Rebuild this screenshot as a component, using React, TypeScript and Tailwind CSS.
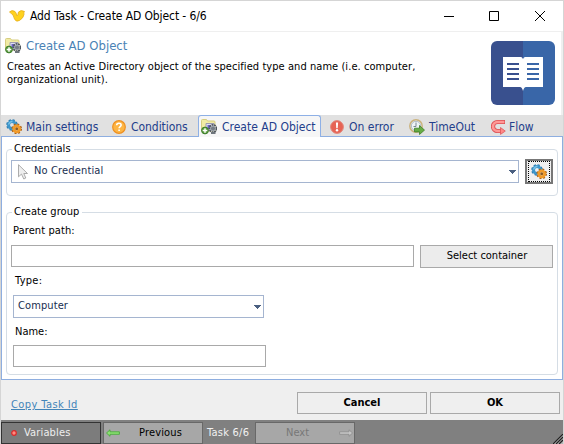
import type { ReactNode } from "react";

function Gears({ className }: { className: string }) {
  return (
    <svg viewBox="0 0 16 16" className={className}>
      <circle cx="6" cy="6" r="4.6" fill="none" stroke="#2b78ad" strokeWidth="2.4" strokeDasharray="2.1 1.5" />
      <circle cx="6" cy="6" r="3.5" fill="none" stroke="#3d96cb" strokeWidth="3" />
      <path d="M2.5 5.5Q3.5 2.5 6.5 2.4" fill="none" stroke="#7cc4e8" strokeWidth="1.2" />
      <circle cx="10.7" cy="9.8" r="4.3" fill="none" stroke="#a85e14" strokeWidth="2" strokeDasharray="1.9 1.48" />
      <circle cx="10.7" cy="9.8" r="3" fill="#fff2d8" stroke="#f19a28" strokeWidth="2.7" />
      <circle cx="10.7" cy="9.8" r="1.5" fill="#8d5a20" />
    </svg>
  );
}

function FolderGear({ className }: { className: string }) {
  return (
    <svg viewBox="0 0 16 16" className={className}>
      <path d="M.5 1.5Q.5.5 1.5.5h4l1 1.5h6.5q1 0 1 1v9H.5z" fill="#f1eba4" stroke="#d6cd80" />
      <path d="M5 4.5h8v7H5z" fill="#dfdff0" stroke="#9a9ab0" />
      <path d="M6.5 6h3v4h-3z" fill="#6b62c4" />
      <circle cx="12" cy="9.5" r="3.3" fill="none" stroke="#50575e" strokeWidth="2.4" strokeDasharray="1.7 .6" />
      <circle cx="12" cy="9.5" r="2.5" fill="#757d86" stroke="#a6adb4" />
      <path d="M10 13h4.5v2H10z" fill="#6e757c" />
      <circle cx="4" cy="11.5" r="3.4" fill="#5d9c40" stroke="#3c7d2a" />
      <path d="M4 9.2v4.6M1.7 11.5h4.6" stroke="#fff" strokeWidth="1.5" />
    </svg>
  );
}

function Question() {
  return (
    <svg viewBox="0 0 14 14" className="mt-[5px] h-[14px] w-[14px] shrink-0">
      <circle cx="7" cy="7" r="6.3" fill="#fdb544" stroke="#ee8f20" strokeWidth="1.2" />
      <path d="M4.7 5.3c0-2.8 4.6-2.6 4.4-.2C9 6.6 7.1 6.6 7.1 8.3" fill="none" stroke="#fff" strokeWidth="1.6" />
      <path d="M6.3 9.5h1.6v1.6H6.3z" fill="#fff" />
    </svg>
  );
}

function ErrorMark() {
  return (
    <svg viewBox="0 0 14 14" className="mt-[5px] h-[14px] w-[14px] shrink-0">
      <circle cx="7" cy="7" r="6.4" fill="#e66354" stroke="#e2877c" />
      <path d="M5.9 2.6h2.2l-.4 5.6H6.3z" fill="#fff" />
      <circle cx="7" cy="10.3" r="1.2" fill="#fff" />
    </svg>
  );
}

function Clock() {
  return (
    <svg viewBox="0 0 16 16" className="mt-[4px] h-4 w-4 shrink-0">
      <circle cx="7" cy="7" r="6.2" fill="#eef3f6" stroke="#cbb27c" strokeWidth="1.5" />
      <circle cx="7" cy="7" r="4.7" fill="none" stroke="#9eabb5" strokeWidth=".8" />
      <path d="M7 3.5v4H4.5" fill="none" stroke="#7a8791" />
      <path d="M5.5 9.2h5V6.5l5 4.6-5 4.4v-2.6h-5z" fill="#67ad45" stroke="#3e7d27" strokeWidth=".8" />
    </svg>
  );
}

function FlowArrow() {
  return (
    <svg viewBox="0 0 15 16" className="mt-[4px] h-4 w-[15px] shrink-0">
      <path d="M14 3H6.5a4.5 4.5 0 0 0 0 9H10" fill="none" stroke="#dc4e52" strokeWidth="4.2" />
      <path d="M13.4 3H6.5a4.5 4.5 0 0 0 0 9H10" fill="none" stroke="#ff9896" strokeWidth="2.6" />
      <path d="M9.5 8.5l4.8 3.6-4.8 3.3z" fill="#ff8a88" stroke="#dc4e52" strokeWidth=".7" />
    </svg>
  );
}

function Caret() {
  return (
    <svg viewBox="0 0 7 4" className="h-1 w-[7px]" shapeRendering="crispEdges">
      <path d="M0 0h7v1H6v1H5v1H4v1H3V3H2V2H1V1H0z" fill="#4a5f80" />
    </svg>
  );
}

function Logo() {
  return (
    <svg viewBox="0 0 64 64" className="mt-[9px] h-16 w-16">
      <path d="M6 0h26v64H6a6 6 0 0 1-6-6V6a6 6 0 0 1 6-6z" fill="#39508e" />
      <path d="M32 0h26a6 6 0 0 1 6 6v52a6 6 0 0 1-6 6H32z" fill="#3966a8" />
      <path d="M12 16h18q1 0 2 2 1-2 2-2h18v30H35q-2 0-3 4-1-4-3-4H12z" fill="#fff" />
      <path d="M16 23h12M16 28h12M16 33h12M16 38h12" stroke="#39508e" strokeWidth="2" />
      <path d="M36 23h12M36 28h12M36 33h12M36 38h12" stroke="#3966a8" strokeWidth="2" />
    </svg>
  );
}

function Group({ title, className, children }: { title: string; className: string; children: ReactNode }) {
  return (
    <section className={"relative rounded-[4px] border border-[#d5dde5] " + className}>
      <span className="absolute -top-[9px] left-[5px] bg-white pl-[2px] pr-[3px] leading-4 tracking-[0.05px]">{title}</span>
      {children}
    </section>
  );
}

export default function App() {
  return (
    <div className="flex h-[444px] w-[564px] flex-col overflow-hidden border-x border-t border-[#d5d5d5] bg-[#efefef] font-['DejaVu_Sans_Condensed','DejaVu_Sans',sans-serif] text-[11px] whitespace-nowrap text-black [font-stretch:condensed]">
      <header className="flex h-[31px] shrink-0 items-center border-b border-[#efefef] bg-white">
        <svg viewBox="0 0 16 12" className="ml-2 h-3 w-4">
          <path d="M.5 2Q3-.5 6 1.5 7.5 3 8 6q1-1 1.500-4Q12-.5 15.500 1.500q-1 1-.5 3Q14.500 8 10.500 10.500 7 12.500 5.500 9 5 4.500.5 2z" fill="#ffd21e" stroke="#e5ac1c" strokeWidth=".8" />
        </svg>
        <h1 className="ml-[5px] text-[12px] leading-4 tracking-[-0.1px]">Add Task - Create AD Object - 6/6</h1>
        <svg viewBox="0 0 104 12" className="ml-auto mr-[17px] h-3 w-[104px]" fill="none" stroke="#000">
          <path d="M2 6.5h10M47.5 1.5h9v9h-9zM93 1l10 10M103 1L93 11" />
        </svg>
      </header>
      <div className="flex h-[83px] shrink-0 justify-between border-r-2 border-[#efefef] bg-white pl-1 pr-[6px]">
        <div className="pt-[5px]">
          <div className="flex items-center">
            <FolderGear className="h-4 w-4" />
            <h2 className="ml-[5px] text-[13px] leading-[18px] text-[#4a82b5]">Create AD Object</h2>
          </div>
          <p className="ml-[2px] mt-[5px] leading-[13px] tracking-[0.06px]">
            Creates an Active Directory object of the specified type and name (i.e. computer,
            <br />
            organizational unit).
          </p>
        </div>
        <Logo />
      </div>
      <nav className="relative flex h-[21px] shrink-0 bg-[#e1e1e1] text-[12px] leading-[24px] text-[#233e8b]">
        <div className="flex w-[105px] pl-[5px]"><Gears className="mt-[4px] h-4 w-4 shrink-0" /><span className="ml-[4px]">Main settings</span></div>
        <div className="flex w-[92px] pl-[6px]"><Question /><span className="ml-[5px] tracking-[-0.05px]">Conditions</span></div>
        <div className="z-10 flex h-[22px] w-[123px] rounded-t-[3px] border border-b-0 border-[#8eb0e6] bg-[#f6f6f6] pl-[2px]"><FolderGear className="mt-[3px] h-4 w-4 shrink-0" /><span className="ml-[5px] leading-[22px]">Create AD Object</span></div>
        <div className="flex w-[83px] pl-[9px]"><ErrorMark /><span className="ml-[5px]">On error</span></div>
        <div className="flex w-[82px] pl-[5px]"><Clock /><span className="ml-[4px]">TimeOut</span></div>
        <div className="flex pl-[5px]"><FlowArrow /><span className="ml-[3px]">Flow</span></div>
      </nav>
      <main className="flex h-[244px] shrink-0 flex-col border border-[#8eaee0] bg-white px-1 pt-[12px]">
        <Group title="Credentials" className="h-[47px]">
          <div className="flex items-start pl-[4px] pt-[10px]">
            <div className="flex h-[23px] w-[508px] items-center border border-[#a5b5d0] pl-[6px] pr-[2px] text-[#172d50]">
              <svg viewBox="0 0 10 16" className="h-4 w-[10px]"><path d="M.5.7v12.1l3-2.7L5.8 15l2-1-2-4.5h3.7z" fill="#eee" stroke="#999" strokeWidth=".8" /></svg>
              <span className="ml-[6px] tracking-[0.15px]">No Credential</span>
              <span className="ml-auto"><Caret /></span>
            </div>
            <button className="-mt-px ml-[6px] flex h-[25px] w-[28px] items-center justify-center border-2 border-[#777] bg-[#f0f0f0]">
              <span className="flex h-[21px] w-[22px] items-center justify-center border border-dotted border-black pr-px"><Gears className="h-4 w-4 shrink-0" /></span>
            </button>
          </div>
        </Group>
        <Group title="Create group" className="mt-[16px] h-[163px]">
          <div className="pl-[4px] pt-[10px]">
            <label className="ml-[2px] block leading-4 tracking-[0.1px]">Parent path:</label>
            <div className="mt-[6px] flex gap-[6px]">
              <div className="h-[22px] w-[403px] border border-[#a9a9a9]" />
              <button className="h-[23px] w-[133px] border border-[#a9a9a9] bg-[#ececec] pl-px">Select container</button>
            </div>
            <div className="ml-[2px]">
              <label className="ml-[2px] mt-[5px] block leading-4 tracking-[0.3px]">Type:</label>
              <div className="mt-[6px] flex h-[23px] w-[251px] items-center border border-[#a5b5d0] pl-[4px] pr-[2px] text-[#172d50]">
                <span className="tracking-[0.1px]">Computer</span><span className="ml-auto"><Caret /></span>
              </div>
              <label className="ml-[2px] mt-[6px] block leading-4">Name:</label>
              <div className="mt-[5px] h-[22px] w-[253px] border border-[#a9a9a9]" />
            </div>
          </div>
        </Group>
      </main>
      <div className="flex h-[40px] shrink-0 pl-[10px] pt-[12px]">
        <a className="mt-[5px] leading-4 tracking-[0.42px] text-[#4384b8] underline">Copy Task Id</a>
        <div className="ml-auto mr-[3px] flex gap-[3px] font-bold">
          <button className="h-[22px] w-[130px] border border-[#a9a9a9] pt-px">Cancel</button>
          <button className="h-[22px] w-[130px] border border-[#a9a9a9] pt-px">OK</button>
        </div>
      </div>
      <footer className="flex h-[24px] shrink-0 items-start bg-[#808080] pt-[2px]">
        <div className="flex h-[22px] w-[100px] items-center border border-[#333] bg-[#7c7c7c] pl-[9px] text-[#eee]">
          <svg viewBox="0 0 6 6" className="h-[6px] w-[6px]"><circle cx="3" cy="3" r="2.3" fill="#ff8a80" stroke="#d92b2b" strokeWidth="1.2" /></svg>
          <span className="ml-[7px] tracking-[0.15px]">Variables</span>
        </div>
        <div className="ml-[2px] flex h-[22px] w-[100px] items-center border border-[#686868] bg-[#a7a7a7] pl-[2px]">
          <svg viewBox="0 0 14 8" className="h-2 w-[14px]"><path d="M.5 4L4 .8v2h9.4v2.5H4v2z" fill="#8cdf73" stroke="#41a832" strokeWidth=".8" /></svg>
          <span className="ml-[19px] tracking-[0.15px]">Previous</span>
        </div>
        <span className="ml-[4px] w-[48px] leading-[22px] tracking-[0.25px] text-[#f2f2f2]">Task 6/6</span>
        <div className="flex h-[22px] w-[100px] items-center border border-[#686868] bg-[#a7a7a7] pl-[30px] text-[#777]">
          <span>Next</span>
          <svg viewBox="0 0 14 8" className="ml-auto mr-[1px] h-2 w-[14px]"><path d="M13.5 4L10 .8v2H.6v2.5H10v2z" fill="#c5c5c5" stroke="#8b8b8b" strokeWidth=".8" /></svg>
        </div>
        <svg viewBox="0 0 11 11" className="ml-auto mt-[11px] h-[11px] w-[11px]"><path d="M0 11L11 0v11z" fill="#b5b5b5" /><path d="M1 11L11 1M4 11l7-7M7 11l4-4" stroke="#222" strokeWidth="1.3" /></svg>
      </footer>
    </div>
  );
}
